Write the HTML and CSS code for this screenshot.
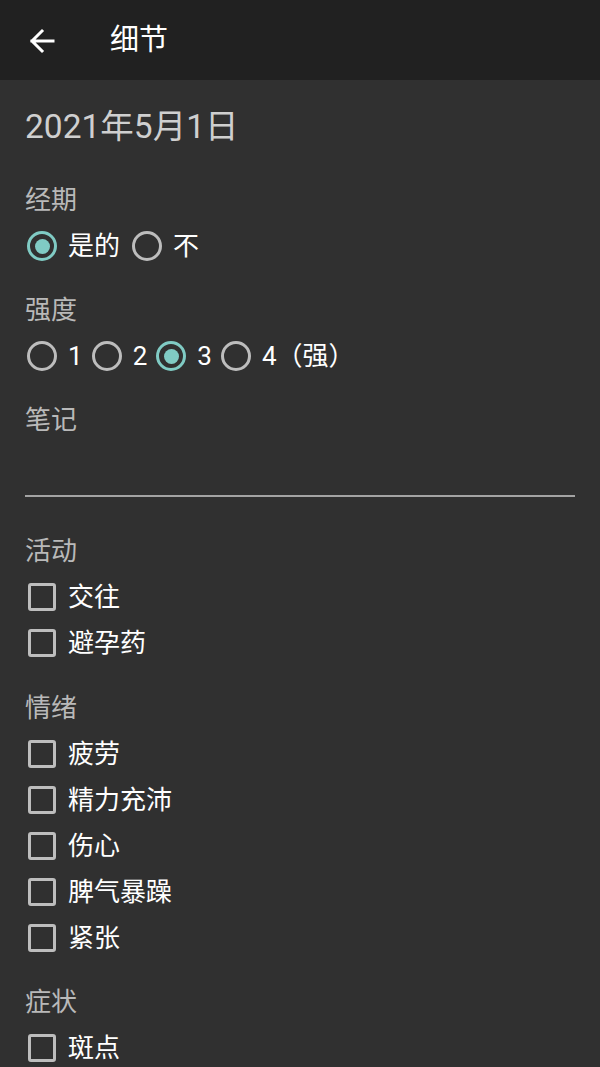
FILE: index.html
```html
<!DOCTYPE html>
<html lang="zh">
<head>
<meta charset="utf-8">
<link rel="stylesheet" href="styles.css">
</head>
<body>
<header class="topbar">
  <svg class="back" width="26" height="26" viewBox="0 0 26 26"><path d="M24 13H3M13 3L3 13l10 10" fill="none" stroke="#fff" stroke-width="3" stroke-linecap="square"/></svg>
  <span class="title">细节</span>
</header>
<main class="content">
  <div class="date">2021年5月1日</div>

  <div class="label l-first">经期</div>
  <div class="radios">
    <span class="radio-item"><span class="radio checked"></span><span class="txt">是的</span></span>
    <span class="radio-item"><span class="radio"></span><span class="txt">不</span></span>
  </div>

  <div class="label">强度</div>
  <div class="radios radios-tight">
    <span class="radio-item"><span class="radio"></span><span class="txt">1</span></span>
    <span class="radio-item"><span class="radio"></span><span class="txt">2</span></span>
    <span class="radio-item"><span class="radio checked"></span><span class="txt">3</span></span>
    <span class="radio-item"><span class="radio"></span><span class="txt">4（强）</span></span>
  </div>

  <div class="label">笔记</div>
  <div class="note-line"></div>

  <div class="label l-section">活动</div>
  <div class="checks">
    <div class="check-row"><span class="box"></span><span class="txt">交往</span></div>
    <div class="check-row"><span class="box"></span><span class="txt">避孕药</span></div>
  </div>

  <div class="label l-mood">情绪</div>
  <div class="checks">
    <div class="check-row"><span class="box"></span><span class="txt">疲劳</span></div>
    <div class="check-row"><span class="box"></span><span class="txt">精力充沛</span></div>
    <div class="check-row"><span class="box"></span><span class="txt">伤心</span></div>
    <div class="check-row"><span class="box"></span><span class="txt">脾气暴躁</span></div>
    <div class="check-row"><span class="box"></span><span class="txt">紧张</span></div>
  </div>

  <div class="label l-symptom">症状</div>
  <div class="checks">
    <div class="check-row"><span class="box"></span><span class="txt">斑点</span></div>
  </div>
</main>
</body>
</html>
```
FILE: styles.css
```css
html, body {
  margin: 0;
  padding: 0;
}
body {
  background: #303030;
  font-family: Roboto, "Noto Sans CJK SC", sans-serif;
  width: 600px;
  height: 1067px;
  overflow: hidden;
}
.topbar {
  height: 80px;
  background: #212121;
  display: flex;
  align-items: center;
  box-sizing: border-box;
  padding-left: 29px;
}
.back {
  display: block;
  margin-top: 1px;
}
.title {
  margin-left: 55px;
  color: #fff;
  font-size: 29px;
  line-height: 40px;
}
.content {
  padding: 0 25px;
}
.date {
  margin-top: 27px;
  font-size: 33.5px;
  line-height: 40px;
  color: #cfcfcf;
}
.label {
  font-size: 26px;
  line-height: 36px;
  color: #b9b9b9;
  margin-top: 23px;
}
.label.l-first {
  margin-top: 35px;
}
.label.l-section {
  margin-top: 36px;
}
.label.l-mood {
  margin-top: 24px;
}
.label.l-symptom {
  margin-top: 23px;
}
.radios {
  display: flex;
  align-items: center;
  height: 46px;
  margin-top: 5px;
  gap: 12px;
}
.radios.radios-tight {
  gap: 9px;
}
.radio-item {
  display: flex;
  align-items: center;
}
.radio {
  width: 24px;
  height: 24px;
  border: 3px solid #bdbdbd;
  border-radius: 50%;
  margin-left: 2px;
  position: relative;
  box-sizing: content-box;
}
.radio-item + .radio-item .radio {
  margin-left: 0;
}
.radio.checked {
  border-color: #80cbc4;
}
.radio.checked::after {
  content: "";
  position: absolute;
  left: 4.5px;
  top: 4.5px;
  width: 15px;
  height: 15px;
  border-radius: 50%;
  background: #80cbc4;
}
.txt {
  color: #fff;
  font-size: 26px;
  line-height: 36px;
  margin-left: 11px;
}
.note-line {
  margin-top: 57px;
  height: 2px;
  background: #a3a3a3;
}
.checks {
  margin-top: 5px;
}
.check-row {
  display: flex;
  align-items: center;
  height: 46px;
}
.box {
  width: 22px;
  height: 22px;
  border: 3px solid #bdbdbd;
  border-radius: 3px;
  margin-left: 3px;
}
.check-row .txt {
  margin-left: 12px;
}
```
